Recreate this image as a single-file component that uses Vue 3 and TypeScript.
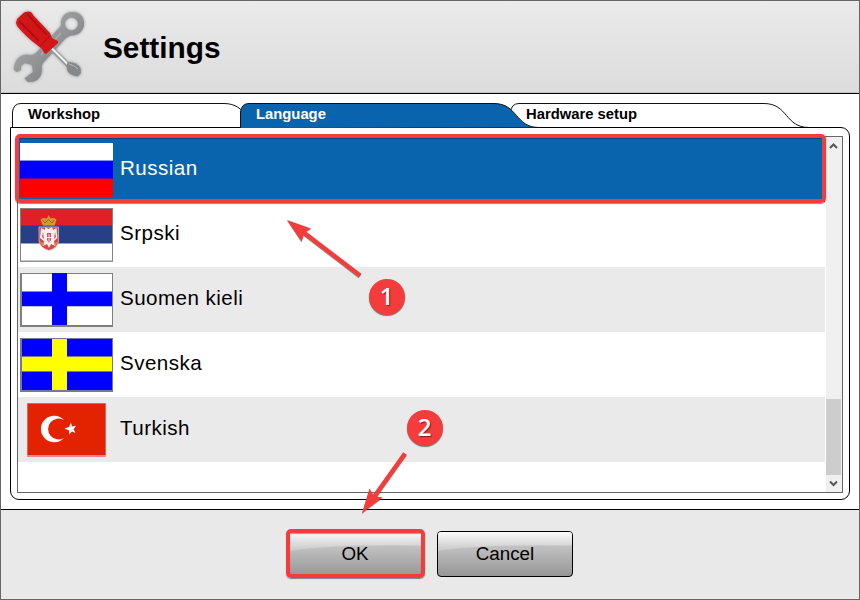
<script setup lang="ts">
import { ref } from 'vue'

interface Language {
  id: string
  name: string
}

interface Tab {
  label: string
  width: number
}

const tabs: Tab[] = [
  { label: 'Workshop', width: 228 },
  { label: 'Language', width: 270 },
  { label: 'Hardware setup', width: 270 },
]
const activeTab = ref(1)

const languages: Language[] = [
  { id: 'ru', name: 'Russian' },
  { id: 'sr', name: 'Srpski' },
  { id: 'fi', name: 'Suomen kieli' },
  { id: 'sv', name: 'Svenska' },
  { id: 'tr', name: 'Turkish' },
]
const selected = ref('ru')

// Outline of a tab: rounded left shoulder and an S-shaped right slope.
function tabPath(w: number): string {
  return `M.5 25V9Q1.5 .5 9 .5H${w - 16}C${w + 8} .5 ${w + 5} 24.5 ${w + 29} 24.5`
}
</script>

<template>
  <div class="window">
    <header class="header">
      <svg class="tools" width="76" height="80" viewBox="0 0 76 80">
        <defs>
          <linearGradient id="steel" x1="0" y1="0" x2="1" y2="1">
            <stop offset="0" stop-color="#b4b6b7" />
            <stop offset=".5" stop-color="#929496" />
            <stop offset="1" stop-color="#6f7173" />
          </linearGradient>
          <linearGradient id="grip" x1="0" y1="1" x2="1" y2="0">
            <stop offset="0" stop-color="#ea1c1f" />
            <stop offset=".5" stop-color="#d01216" />
            <stop offset="1" stop-color="#d91c20" />
          </linearGradient>
          <filter id="soft" x="-20%" y="-20%" width="140%" height="140%">
            <feDropShadow dx="0" dy="0" stdDeviation="1.500" flood-color="#555" flood-opacity=".6" />
          </filter>
        </defs>
        <g filter="url(#soft)">
          <path fill="url(#steel)" fill-rule="evenodd" d="M50 17C49 8 56 3.500 62 4C70 4 74 11 73 17C72 24 66 28 60 27.500Q57 28 54 31L33 54Q30 57 31 61C31 69 26 75 17 74L13.500 70.500L22 64L21 57L14 55L10 58V62L6 64L3 62C3 53 8 47 16 46.500Q22 48 25 45L47 21Q50 19 50 17ZM60.500 9.500A6.500 6.500 0 1 0 60.500 22.500A6.500 6.500 0 1 0 60.500 9.500Z" />
          <path stroke="#acaeb0" stroke-width="1.200" fill="none" d="M30 47L50 25" />
          <path d="M41 38L59 56L56 59L38 41Z" fill="#8d8f91" />
          <path d="M41 39L58 56L56.500 57.500L39 40Z" fill="#f0f1f1" />
          <path d="M57 54Q66 54 69.500 60L70 65L67 68.500Q61 68 57 64Q55 60 56 56Z" fill="#85888a" />
          <path d="M58 56Q63 57 67 61" stroke="#b5b7b8" fill="none" />
          <path d="M5 15L6 11L13 4.500Q17 3 20 4L23 8L39 25L41 30L47 33V35L35 46L33 45L31 41L26 37Q15 29 6 18Z" fill="url(#grip)" />
          <path d="M9 14L27 32M17 7L35 26" stroke="#aa1015" stroke-width="1.800" fill="none" stroke-linecap="round" />
          <path d="M29 38L39 28" stroke="#a80f14" fill="none" />
        </g>
      </svg>
      <h1 class="title">Settings</h1>
    </header>

    <main class="content">
      <nav class="tabs">
        <button
          v-for="(tab, i) in tabs"
          :key="tab.label"
          class="tab"
          :class="{ active: i === activeTab }"
          :style="{ width: tab.width + 'px' }"
          @click="activeTab = i"
        >
          <svg class="tab-shape" :width="tab.width + 32" :height="i === activeTab ? 25 : 24">
            <path :d="tabPath(tab.width)" />
          </svg>
          <span>{{ tab.label }}</span>
        </button>
      </nav>

      <section class="panel">
        <div class="list">
          <ul class="rows">
            <li
              v-for="lang in languages"
              :key="lang.id"
              class="row"
              :class="{ selected: lang.id === selected }"
              @click="selected = lang.id"
            >
              <svg class="flag" width="93" height="54" viewBox="0 0 93 54">
                <template v-if="lang.id === 'ru'">
                  <path fill="#fff" d="M0 0H93V18H0Z" />
                  <path fill="#00f" d="M0 18H93V36H0Z" />
                  <path fill="#f00" d="M0 36H93V54H0Z" />
                  <path fill="#8b8bf0" d="M0 17H93V18H0Z" />
                  <path fill="#70008a" d="M0 35H93V36H0Z" />
                </template>
                <template v-else-if="lang.id === 'sr'">
                  <path fill="#e01f28" d="M0 0H93V18H0Z" />
                  <path fill="#263f87" d="M0 17.500H93V36H0Z" />
                  <path fill="#fff" d="M0 35.500H93V54H0Z" />
                  <path fill="none" stroke="#8a7f83" d="M.5 54V.5H92.500V54" />
                  <path fill="#8d9394" d="M0 52.500H93V54H0Z" />
                  <path fill="#d8444a" stroke="#efc9c4" stroke-width=".7" d="M19 19H38.500V33Q38 40 29 42.500Q20 40 19 33Z" />
                  <path fill="#f5efee" d="M25 19L28.500 21L32 19L33 22L36.500 20L37.500 30L34 33L35 38L31 36L29 40L27 36L23 38L24 33L20 30L21 20L25 22Z" />
                  <path fill="#d5515a" d="M27 25H31V32L29 35L27 32ZM23 24L24 31L22 29ZM35 24L34 31L36 29Z" />
                  <path stroke="#fff" stroke-width=".8" d="M29 26V34M27 29.500H31" />
                  <path fill="#df8a24" d="M19.500 33L24 35.500L22.500 38.500ZM38 33L34 35.500L35.500 38.500Z" />
                  <path fill="#d19c2c" d="M23 17.500L20.500 12Q22 9 27 10.500L28.500 7L30.500 10.500Q35 9 36.500 12L34.500 17.500Z" />
                  <path stroke="#92551f" fill="none" stroke-width=".8" d="M22.500 12L25 15L28.500 11.500L32 15L34.500 12" />
                </template>
                <template v-else-if="lang.id === 'fi'">
                  <path fill="#808080" d="M0 0H93V54H0Z" />
                  <path fill="#fff" d="M2 1H92V52H2Z" />
                  <path fill="#00f" d="M32 0H47V52H32ZM2 18.400H92V33.300H2Z" />
                </template>
                <template v-else-if="lang.id === 'sv'">
                  <path fill="#77779a" d="M0 0H93V54H0Z" />
                  <path fill="#00f" d="M2 1H92V52H2Z" />
                  <path fill="#77778a" d="M2 18H92V34H2Z" />
                  <path fill="#ff0" d="M32 1H47V52H32ZM2 19H92V33H2Z" />
                </template>
                <template v-else>
                  <path fill="#e32200" stroke="#d8656c" d="M7.500 .5H85.500V53.500H7.500Z" />
                  <path stroke="#eb8795" stroke-width="2" d="M7 53H86" />
                  <path fill="#fff" d="M44 17A13.300 13.300 0 1 0 44 35A10.500 10.500 0 1 1 44 17Z" />
                  <path fill="#fff" d="M51 19.500L52 23.500L56 22.800L53.600 26.200L55.500 30L52 28.500L49 31.500L49 27.500L44.500 25.500L49 24Z" />
                </template>
              </svg>
              <span class="name">{{ lang.name }}</span>
            </li>
          </ul>
          <div class="scrollbar">
            <svg width="16" height="17"><path d="M4 11L7.500 7.500L11 11" /></svg>
            <div class="thumb"></div>
            <svg width="16" height="17"><path d="M4 6.500L7.500 10L11 6.500" /></svg>
          </div>
        </div>
      </section>
    </main>

    <footer class="footer">
      <button v-for="label in ['OK', 'Cancel']" :key="label" class="action">
        <svg class="gloss" width="134" height="44">
          <defs>
            <linearGradient id="shine" x1="0" y1="0" x2="0" y2="1">
              <stop offset="0" stop-color="#fafafa" />
              <stop offset="1" stop-color="#c8c8c8" />
            </linearGradient>
          </defs>
          <path fill="url(#shine)" d="M0 0H134V13.500Q45 12 0 19Z" />
        </svg>
        <span>{{ label }}</span>
      </button>
    </footer>

    <div class="highlight highlight-row"></div>
    <div class="highlight highlight-ok"></div>
    <svg class="arrows" width="860" height="600">
      <g stroke="#f43c3c" stroke-width="4.500" fill="none">
        <path d="M303 232L360 275.500" />
        <path d="M405 453.500L374 497" />
      </g>
      <path fill="#f43c3c" d="M287 220L311 228.500L304.500 232.500L301.500 241.500Z" />
      <path fill="#f43c3c" d="M362 513L369.500 488.500L374 496L382.500 497.500Z" />
    </svg>
    <div class="badge badge-1">1</div>
    <div class="badge badge-2">2</div>
  </div>
</template>

<style>
body {
  margin: 0;
  overflow: hidden;
}
</style>

<style scoped>
.window {
  position: relative;
  box-sizing: border-box;
  width: 860px;
  height: 600px;
  display: flex;
  flex-direction: column;
  border: 1px solid #666;
  background: #fff;
  color: #000;
  font-family: "Liberation Sans", Arial, sans-serif;
}
.header {
  box-sizing: border-box;
  height: 93px;
  flex: none;
  display: flex;
  align-items: center;
  gap: 16px;
  padding-left: 10px;
  background: linear-gradient(#eaeaea, #dcdcdc);
  border-bottom: 1px solid #000;
  box-shadow: inset 0 -1px #c4c4c4;
}
.tools {
  margin-top: 2px;
}
.title {
  margin: 2px 0 0;
  font-size: 29.800px;
  line-height: 34px;
  font-weight: bold;
}
.content {
  flex: none;
  box-sizing: border-box;
  height: 415px;
  padding: 9px 9px 0;
}
.tabs {
  display: flex;
  height: 24px;
  padding-left: 2px;
}
.tab {
  position: relative;
  flex: none;
  padding: 0 0 0 16px;
  border: 0;
  background: none;
  height: 24px;
  font: bold 14.800px/22px "Liberation Sans", Arial, sans-serif;
  text-align: left;
  color: #000;
}
.tab span {
  position: relative;
  display: block;
  height: 24px;
}
.tab-shape {
  position: absolute;
  left: 0;
  top: 0;
}
.tab-shape path {
  fill: #fff;
  stroke: #111;
  stroke-width: 1;
}
.tab.active {
  z-index: 2;
  color: #fff;
}
.tab.active path {
  fill: #0a64ad;
}
.panel {
  box-sizing: border-box;
  width: 840px;
  height: 373px;
  padding: 8px 6px;
  border: 1px solid #000;
  border-radius: 0 9px 9px 9px;
}
.list {
  box-sizing: border-box;
  display: flex;
  width: 826px;
  height: 357px;
  border: 1px solid #666;
}
.rows {
  flex: 1;
  margin: 0 1px 0 0;
  padding: 0;
  list-style: none;
}
.row {
  display: flex;
  align-items: center;
  box-sizing: border-box;
  height: 65px;
  padding: 0 0 0 2px;
  gap: 7px;
  font-size: 20.600px;
  letter-spacing: .45px;
}
.row:nth-child(odd) {
  background: #eaeaea;
}
.row.selected {
  background: #0a64ad;
  color: #fff;
}
.name {
  line-height: 24px;
  margin-top: -3px;
}
.scrollbar {
  display: flex;
  flex-direction: column;
  justify-content: space-between;
  width: 16px;
  background: #f0f0f0;
}
.scrollbar path {
  fill: none;
  stroke: #555;
  stroke-width: 2;
}
.thumb {
  width: 15px;
  height: 76px;
  margin-top: auto;
  background: #cdcdcd;
}
.footer {
  flex: 1;
  display: flex;
  gap: 14px;
  justify-content: center;
  align-items: flex-start;
  padding: 21px 0 0;
  background: #e9e9e9;
  border-top: 1px solid #000;
}
.action {
  position: relative;
  box-sizing: border-box;
  width: 136px;
  height: 46px;
  padding: 0;
  border: 1px solid #000;
  border-radius: 4px;
  overflow: hidden;
  background: linear-gradient(#d4d4d4 0%, #bdbdbd 40%, #969696 100%);
  color: #000;
  font: 18.800px/44px "Liberation Sans", Arial, sans-serif;
}
.action span {
  position: relative;
}
.gloss {
  position: absolute;
  left: 0;
  top: 0;
}
.highlight {
  position: absolute;
  box-sizing: border-box;
  border: 4px solid #f43c3c;
  border-radius: 5px;
  box-shadow: 0 1px 1px rgba(0, 0, 0, .45), inset 0 1px 1px rgba(0, 0, 0, .35);
}
.highlight-row {
  left: 14px;
  top: 133px;
  width: 811px;
  height: 69px;
}
.highlight-ok {
  left: 285px;
  top: 528px;
  width: 139px;
  height: 49px;
}
.arrows {
  position: absolute;
  left: -1px;
  top: -1px;
  filter: drop-shadow(0 1px .5px rgba(0, 0, 0, .4));
}
.badge {
  position: absolute;
  width: 36px;
  height: 36px;
  border-radius: 50%;
  background: #f43c3c;
  box-shadow: 0 1px 1px rgba(0, 0, 0, .5);
  color: #fff;
  font: 600 24px/34px "Open Sans", sans-serif;
  text-align: center;
  text-shadow: 1px 1px 1px rgba(0, 0, 0, .5);
}
.badge-1 {
  left: 367.500px;
  top: 278px;
}
.badge-2 {
  left: 405.500px;
  top: 409px;
}
</style>
